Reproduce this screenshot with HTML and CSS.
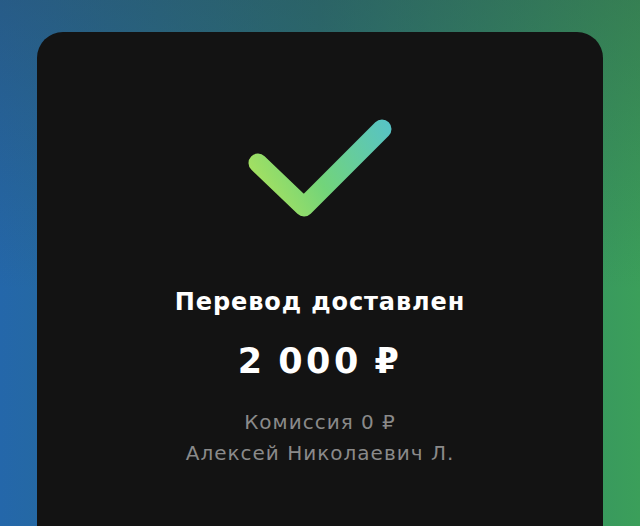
FILE: index.html
```html
<!DOCTYPE html>
<html lang="ru">
<head>
<meta charset="utf-8">
<link rel="stylesheet" href="styles.css">
</head>
<body>
<div class="page">
  <div class="card">
    <svg class="check" width="160" height="110" viewBox="0 0 160 110">
      <defs>
        <linearGradient id="g" x1="10" y1="90" x2="150" y2="10" gradientUnits="userSpaceOnUse">
          <stop offset="0" stop-color="#b2e45a"/>
          <stop offset="0.45" stop-color="#72d47a"/>
          <stop offset="1" stop-color="#57c3c6"/>
        </linearGradient>
      </defs>
      <path d="M18 49 L64 93 L142 15" fill="none" stroke="url(#g)" stroke-width="19" stroke-linecap="round" stroke-linejoin="round"/>
    </svg>
    <div class="title">Перевод доставлен</div>
    <div class="amount">2 000 ₽</div>
    <div class="meta first">Комиссия 0 ₽</div>
    <div class="meta">Алексей Николаевич Л.</div>
  </div>
</div>
</body>
</html>
```

FILE: styles.css
```css
html, body {
  margin: 0;
  padding: 0;
  width: 640px;
  height: 526px;
  overflow: hidden;
}
body {
  background:
    linear-gradient(180deg, rgba(45, 70, 70, 0.35) 0%, rgba(45, 70, 70, 0) 55%),
    linear-gradient(90deg, #2467aa 0%, #2a7378 50%, #3b9f5a 100%);
  font-family: "DejaVu Sans", "Open Sans", sans-serif;
}
.page {
  padding: 32px 37px 0 37px;
}
.card {
  background: #131313;
  border-radius: 26px;
  height: 520px;
  display: flex;
  flex-direction: column;
  align-items: center;
  padding-top: 82px;
  box-sizing: border-box;
}
.check {
  display: block;
  flex-shrink: 0;
}
.title {
  margin-top: 63px;
  color: #ffffff;
  font-size: 24px;
  font-weight: 700;
  line-height: 30px;
  letter-spacing: 0.9px;
  white-space: nowrap;
}
.amount {
  margin-top: 24px;
  color: #ffffff;
  font-size: 35px;
  font-weight: 700;
  line-height: 40px;
  letter-spacing: 3.5px;
  word-spacing: -3px;
  white-space: nowrap;
}
.meta {
  color: #8a8a8a;
  font-size: 20px;
  line-height: 31px;
  letter-spacing: 1px;
  white-space: nowrap;
}
.meta.first {
  margin-top: 26px;
}
```
